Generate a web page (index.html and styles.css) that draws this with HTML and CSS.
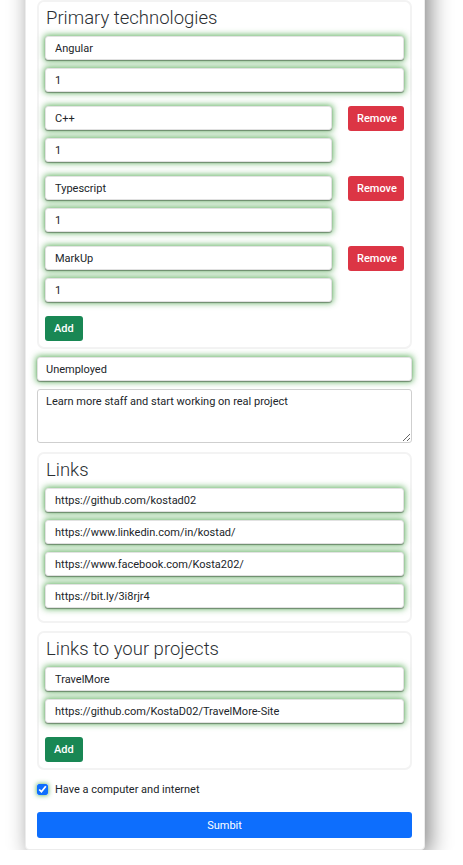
FILE: index.html
```html
<!DOCTYPE html>
<html>
<head>
<meta charset="utf-8">
<link rel="stylesheet" href="styles.css">
</head>
<body>
<form class="card">
  <div class="box">
    <div class="title">Primary technologies</div>
    <div class="group">
      <div class="fields">
        <input class="field" value="Angular">
        <input class="field" value="1">
      </div>
    </div>
    <div class="group with-remove">
      <div class="fields">
        <input class="field" value="C++">
        <input class="field" value="1">
      </div>
      <button type="button" class="btn btn-red">Remove</button>
    </div>
    <div class="group with-remove">
      <div class="fields">
        <input class="field" value="Typescript">
        <input class="field" value="1">
      </div>
      <button type="button" class="btn btn-red">Remove</button>
    </div>
    <div class="group with-remove">
      <div class="fields">
        <input class="field" value="MarkUp">
        <input class="field" value="1">
      </div>
      <button type="button" class="btn btn-red">Remove</button>
    </div>
    <button type="button" class="btn btn-green">Add</button>
  </div>

  <input class="field wide" value="Unemployed">
  <textarea class="area">Learn more staff and start working on real project</textarea>

  <div class="box">
    <div class="title">Links</div>
    <div class="fields">
      <input class="field" value="https://github.com/kostad02">
      <input class="field" value="https://www.linkedin.com/in/kostad/">
      <input class="field" value="https://www.facebook.com/Kosta202/">
      <input class="field" value="https://bit.ly/3i8rjr4">
    </div>
  </div>

  <div class="box">
    <div class="title">Links to your projects</div>
    <div class="group">
      <div class="fields">
        <input class="field" value="TravelMore">
        <input class="field" value="https://github.com/KostaD02/TravelMore-Site">
      </div>
    </div>
    <button type="button" class="btn btn-green">Add</button>
  </div>

  <label class="check">
    <input type="checkbox" checked>
    <span>Have a computer and internet</span>
  </label>

  <button type="button" class="btn btn-blue">Sumbit</button>
</form>
</body>
</html>
```

FILE: styles.css
```css
html, body {
  margin: 0;
  padding: 0;
  background: #ffffff;
  font-family: Roboto, "Liberation Sans", sans-serif;
  color: #212529;
}

.card {
  box-sizing: border-box;
  width: 400px;
  margin: -30px 0 0 25px;
  padding: 29px 12px 11px 11px;
  background: #fff;
  border: 1px solid #ececec;
  border-radius: 4px;
  box-shadow: 5px 5px 22px rgba(0, 0, 0, 0.48);
  display: flex;
  flex-direction: column;
}

.box {
  border: 2px solid #f3f3f3;
  border-radius: 7px;
  padding: 3px 6px 6px;
  margin-bottom: 8px;
  display: flex;
  flex-direction: column;
  align-items: flex-start;
}

.title {
  font-size: 18.5px;
  font-weight: 300;
  line-height: 26px;
  color: #2b2f33;
  margin: 0 0 5px 1px;
}

.group {
  align-self: stretch;
  display: flex;
  gap: 16px;
  align-items: flex-start;
  margin-bottom: 6px;
}

.fields {
  align-self: stretch;
  flex: 1;
  display: flex;
  flex-direction: column;
  gap: 8px;
}

.box > .fields {
  margin-bottom: 7px;
}

.field {
  box-sizing: border-box;
  display: block;
  width: 100%;
  height: 24px;
  margin: 0;
  padding: 0 9px;
  font-family: Roboto, "Liberation Sans", sans-serif;
  font-size: 11px;
  color: #212529;
  background: #fff;
  border: 1px solid #e2e2e2;
  border-radius: 3px;
  box-shadow: 0 1px 1px rgba(0, 0, 0, 0.35), 0 0 6px 1px rgba(40, 150, 40, 0.72);
  outline: none;
}

.group .fields .field:last-child {
  margin-bottom: 8px;
}

.with-remove .btn {
  width: 56px;
  flex: none;
}

.wide {
  margin-bottom: 8px;
  padding-left: 8px;
}

.area {
  box-sizing: border-box;
  display: block;
  width: 100%;
  height: 54px;
  margin: 0 0 9px;
  padding: 5px 8px;
  font-family: Roboto, "Liberation Sans", sans-serif;
  font-size: 11px;
  line-height: 14px;
  color: #212529;
  border: 1px solid #cfcfcf;
  border-radius: 3px;
  resize: vertical;
}

.btn {
  box-sizing: border-box;
  height: 25px;
  padding: 0 9px;
  border: none;
  border-radius: 3px;
  color: #fff;
  font-family: Roboto, "Liberation Sans", sans-serif;
  font-size: 11px;
  font-weight: 500;
  cursor: pointer;
}

.btn-red {
  background: #dc3545;
}

.btn-green {
  background: #198754;
}

.btn-blue {
  width: 100%;
  height: 26px;
  background: #0d6efd;
  font-weight: 400;
}

.check {
  display: flex;
  align-items: center;
  gap: 7px;
  font-size: 11px;
  color: #212529;
  margin: 5px 0 16px;
}

.check input {
  width: 11px;
  height: 11px;
  margin: 0;
  accent-color: #0d6efd;
  box-shadow: 0 0 5px rgba(40, 150, 40, 0.85);
  border-radius: 2px;
}
```
